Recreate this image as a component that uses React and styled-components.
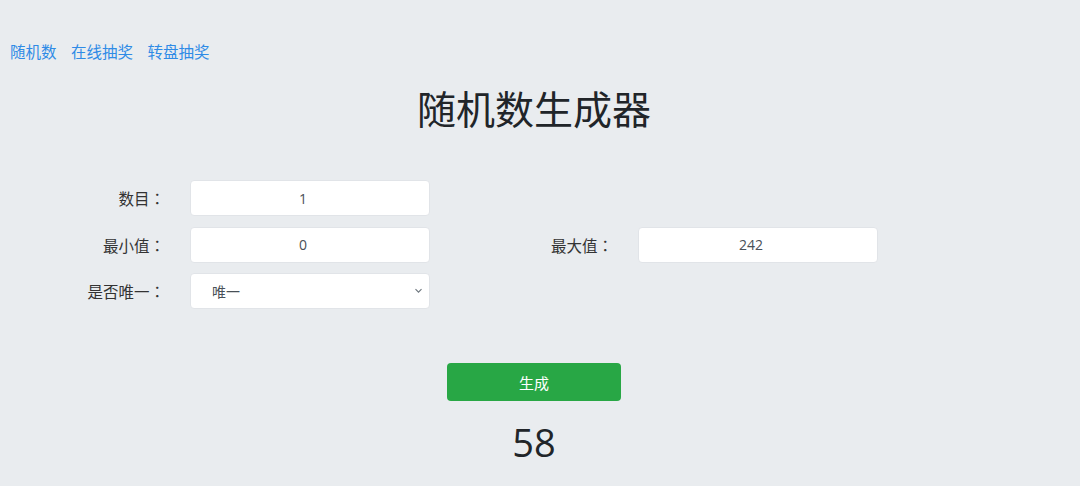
import React from "react";
import styled, { createGlobalStyle } from "styled-components";

const Global = createGlobalStyle`
  html, body { margin: 0; padding: 0; background: #e9ecef; }
  body { font-family: "Noto Sans", "Noto Sans CJK SC", sans-serif; color: #212529; }
  * { box-sizing: border-box; }
`;

const Page = styled.div`
  min-height: 486px;
  padding-right: 12px;
  background: #e9ecef;
  overflow: hidden;
`;

const Nav = styled.nav`
  display: flex;
  gap: 14.5px;
  padding: 40px 10px 0;
  height: 62px;
`;

const NavLink = styled.a`
  font-family: "Noto Sans CJK SC", sans-serif;
  font-size: 15.5px;
  line-height: 22px;
  color: #2f8be6;
  text-decoration: none;
`;

const Title = styled.h1`
  margin: 22px 0 0;
  text-align: center;
  font-family: "Noto Sans CJK SC", sans-serif;
  font-weight: 400;
  font-size: 39px;
  line-height: 47px;
  color: #212529;
`;

const Form = styled.div`
  margin-top: 49px;
  display: flex;
  flex-direction: column;
  gap: 10.5px;
`;

const Row = styled.div`
  display: flex;
  height: 36px;
`;

const Group = styled.div`
  display: flex;
  align-items: center;
  width: 448px;
`;

const Label = styled.label`
  width: 190px;
  padding-right: 25px;
  text-align: right;
  font-family: "Noto Sans CJK SC", sans-serif;
  font-size: 15.5px;
  color: #333;
`;

const Colon = styled.span`
  font-family: "Noto Sans CJK JP", sans-serif;
`;

const Input = styled.input`
  width: 240px;
  height: 36px;
  border: 1px solid #e1e4e8;
  border-radius: 4px;
  background: #fff;
  padding: 0 26px 0 12px;
  text-align: center;
  font-family: "Open Sans", "Noto Sans", sans-serif;
  font-size: 14px;
  color: #495057;
  outline: none;
`;

const SelectWrap = styled.div`
  position: relative;
  width: 240px;
  height: 36px;
`;

const Select = styled.select`
  appearance: none;
  -webkit-appearance: none;
  width: 100%;
  height: 100%;
  border: 1px solid #e1e4e8;
  border-radius: 4px;
  background: #fff;
  padding: 0 24px 0 21px;
  font-family: "Noto Sans CJK SC", sans-serif;
  font-size: 14px;
  color: #495057;
  outline: none;
`;

const Chevron = styled.svg`
  position: absolute;
  right: 7px;
  top: 15px;
  pointer-events: none;
`;

const Actions = styled.div`
  display: flex;
  flex-direction: column;
  align-items: center;
  margin-top: 54px;
`;

const Button = styled.button`
  width: 174px;
  height: 38px;
  border: none;
  border-radius: 4px;
  background: #28a745;
  color: #fff;
  font-family: "Noto Sans CJK SC", sans-serif;
  font-size: 15px;
  cursor: pointer;
`;

const Result = styled.div`
  margin-top: 18px;
  font-family: "Open Sans", "Noto Sans", sans-serif;
  font-weight: 500;
  font-size: 38px;
  line-height: 46px;
  color: #212529;
`;

const Field = ({ label, children }) => (
  <Group>
    <Label>
      {label}
      <Colon>：</Colon>
    </Label>
    {children}
  </Group>
);

export default function App() {
  return (
    <Page>
      <Global />
      <Nav>
        <NavLink href="#">随机数</NavLink>
        <NavLink href="#">在线抽奖</NavLink>
        <NavLink href="#">转盘抽奖</NavLink>
      </Nav>
      <Title>随机数生成器</Title>
      <Form>
        <Row>
          <Field label="数目">
            <Input defaultValue="1" />
          </Field>
        </Row>
        <Row>
          <Field label="最小值">
            <Input defaultValue="0" />
          </Field>
          <Field label="最大值">
            <Input defaultValue="242" />
          </Field>
        </Row>
        <Row>
          <Field label="是否唯一">
            <SelectWrap>
              <Select defaultValue="1">
                <option value="1">唯一</option>
                <option value="0">不唯一</option>
              </Select>
              <Chevron width="9" height="6" viewBox="0 0 9 6">
                <path d="M1.5 1.2l3 3 3-3" fill="none" stroke="#6c757d" strokeWidth="1.1" />
              </Chevron>
            </SelectWrap>
          </Field>
        </Row>
      </Form>
      <Actions>
        <Button>生成</Button>
        <Result>58</Result>
      </Actions>
    </Page>
  );
}
